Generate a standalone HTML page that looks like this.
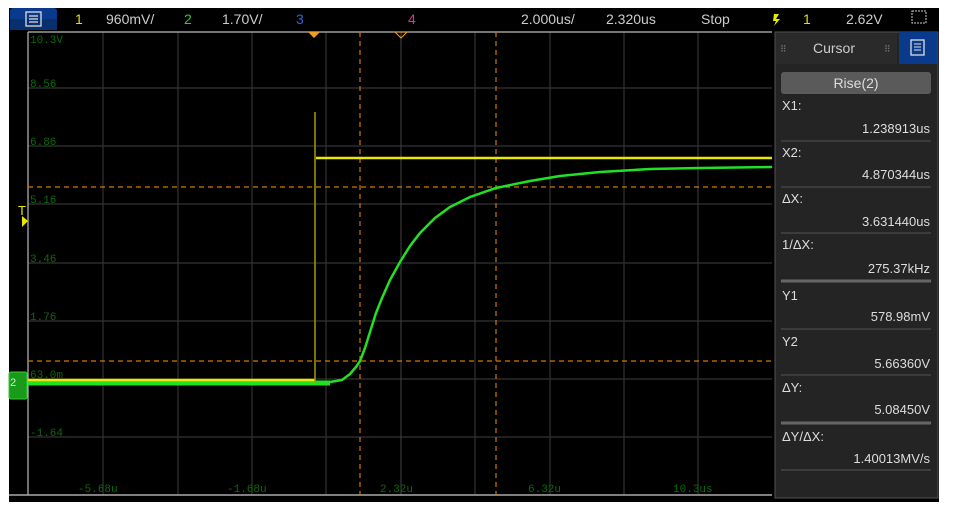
<!DOCTYPE html><html><head><style>
body{margin:0;background:#fff;width:953px;height:517px;overflow:hidden;font-family:"Liberation Sans",sans-serif}
svg{position:absolute;left:0;top:0}
</style></head><body>
<svg width="953" height="517" xmlns="http://www.w3.org/2000/svg" font-family="Liberation Sans, sans-serif">
<rect x="9" y="8" width="930" height="494" fill="#000"/>
<rect x="10" y="8" width="47" height="22" rx="3" fill="#0a3a8c"/>
<rect x="10" y="19" width="47" height="11" fill="#08306f"/>
<rect x="26" y="12" width="15" height="14" fill="none" stroke="#ddd" stroke-width="1.3"/>
<path d="M29 16h9M29 19h9M29 22h9" stroke="#ddd" stroke-width="1.2"/>
<g font-size="14">
<text x="75" y="24" fill="#e0e000">1</text>
<text x="106" y="24" fill="#ccc">960mV/</text>
<text x="184" y="24" fill="#3c3">2</text>
<text x="222" y="24" fill="#ccc">1.70V/</text>
<text x="296" y="24" fill="#36c">3</text>
<text x="408" y="24" fill="#e0309a">4</text>
<text x="521" y="24" fill="#ccc">2.000us/</text>
<text x="606" y="24" fill="#ccc">2.320us</text>
<text x="701" y="24" fill="#ccc">Stop</text>
<path d="M774 14h5l-3 5h4l-6 7 2-5h-3z" fill="#e8e800"/>
<text x="803" y="24" fill="#e0e000">1</text>
<text x="846" y="24" fill="#ccc">2.62V</text>
</g>
<rect x="912" y="11" width="14" height="12" fill="none" stroke="#ccc" stroke-dasharray="2 1"/>
<g stroke="#333" stroke-width="1.2">
<path d="M103 32V495M178 32V495M252 32V495M326 32V495M475 32V495M550 32V495M624 32V495M698 32V495"/>
<path d="M28 88H772M28 146H772M28 204H772M28 263H772M28 321H772M28 379H772M28 437H772"/>
</g>
<path d="M401 32V495" stroke="#444"/>
<path d="M28 32V495M28 32H772" stroke="#bbb" stroke-width="1.2"/>
<path d="M9 495H772" stroke="#aaa" stroke-width="1.5"/>
<g font-family="Liberation Mono, monospace" font-size="11" fill="#0a6a0a">
<text x="30" y="43">10.3V</text><text x="30" y="87">8.56</text><text x="30" y="145">6.86</text>
<text x="30" y="203">5.16</text><text x="30" y="262">3.46</text><text x="30" y="320">1.76</text>
<text x="30" y="378">63.0m</text><text x="30" y="436">-1.64</text>
<text x="78" y="492">-5.68u</text><text x="227" y="492">-1.68u</text><text x="380" y="492">2.32u</text>
<text x="528" y="492">6.32u</text><text x="673" y="492">10.3us</text>
</g>
<g stroke="#d07800" stroke-width="1.2" stroke-dasharray="5 4">
<path d="M360 32V495M496 32V495M28 187H772M28 361H772"/>
</g>
<path d="M308 32h12l-6 6z" fill="#f0a020"/>
<path d="M395 32h12l-6 6z" fill="none" stroke="#f0a020"/>
<path d="M28 383H330" stroke="#22e022" stroke-width="5"/>
<path d="M28 380H315M316 158H772" stroke="#e8e800" stroke-width="2.5" fill="none"/>
<path d="M315 383V112" stroke="#a0a000" stroke-width="1.5"/>
<polyline fill="none" stroke="#22e022" stroke-width="2.5" points="330,382 342,380 350,374 356,367 360,361 365,348 370,332 376,313 382,298 390,280 400,262 410,246 420,233 435,218 450,207 470,197 496,188 530,181 560,176 600,172 650,169 700,168 772,167"/>
<text x="18" y="215" fill="#e8e800" font-size="13">T</text>
<path d="M22 216l6 5-6 6z" fill="#e8e800"/>
<rect x="9" y="372" width="18" height="27" rx="2" fill="#1a9a1a" stroke="#3c3"/>
<text x="10" y="386" fill="#cfc" font-size="11">2</text>
<rect x="775" y="32" width="163" height="466" fill="#242424" stroke="#555"/>
<rect x="776" y="33" width="121" height="31" fill="#2a2a2a"/>
<text x="813" y="53" fill="#ccc" font-size="14">Cursor</text>
<text x="780" y="52" fill="#777" font-size="9">⠿</text><text x="884" y="52" fill="#777" font-size="9">⠿</text>
<rect x="899" y="32" width="38" height="32" fill="#0a3a8c"/>
<rect x="911" y="40" width="13" height="15" fill="none" stroke="#ddd" stroke-width="1.3"/>
<path d="M914 44h7M914 47h7M914 50h7" stroke="#ddd"/>
<rect x="781" y="72" width="150" height="22" rx="3" fill="#5a5a5a"/>
<text x="856" y="88" fill="#ddd" font-size="14" text-anchor="middle">Rise(2)</text>
<g font-size="13" fill="#ddd">
<text x="782" y="110">X1:</text><text x="930" y="133" text-anchor="end">1.238913us</text>
<text x="782" y="157">X2:</text><text x="930" y="179" text-anchor="end">4.870344us</text>
<text x="782" y="203">ΔX:</text><text x="930" y="226" text-anchor="end">3.631440us</text>
<text x="782" y="249">1/ΔX:</text><text x="930" y="273" text-anchor="end">275.37kHz</text>
<text x="782" y="300">Y1</text><text x="930" y="321" text-anchor="end">578.98mV</text>
<text x="782" y="346">Y2</text><text x="930" y="368" text-anchor="end">5.66360V</text>
<text x="782" y="392">ΔY:</text><text x="930" y="414" text-anchor="end">5.08450V</text>
<text x="782" y="441">ΔY/ΔX:</text><text x="930" y="463" text-anchor="end">1.40013MV/s</text>
</g>
<g stroke="#555"><path d="M781 141H931M781 187H931M781 233H931M781 329H931M781 375H931M781 470H931"/></g>
<g stroke="#666" stroke-width="3"><path d="M781 281H931M781 423H931"/></g>
</svg>
</body></html>
